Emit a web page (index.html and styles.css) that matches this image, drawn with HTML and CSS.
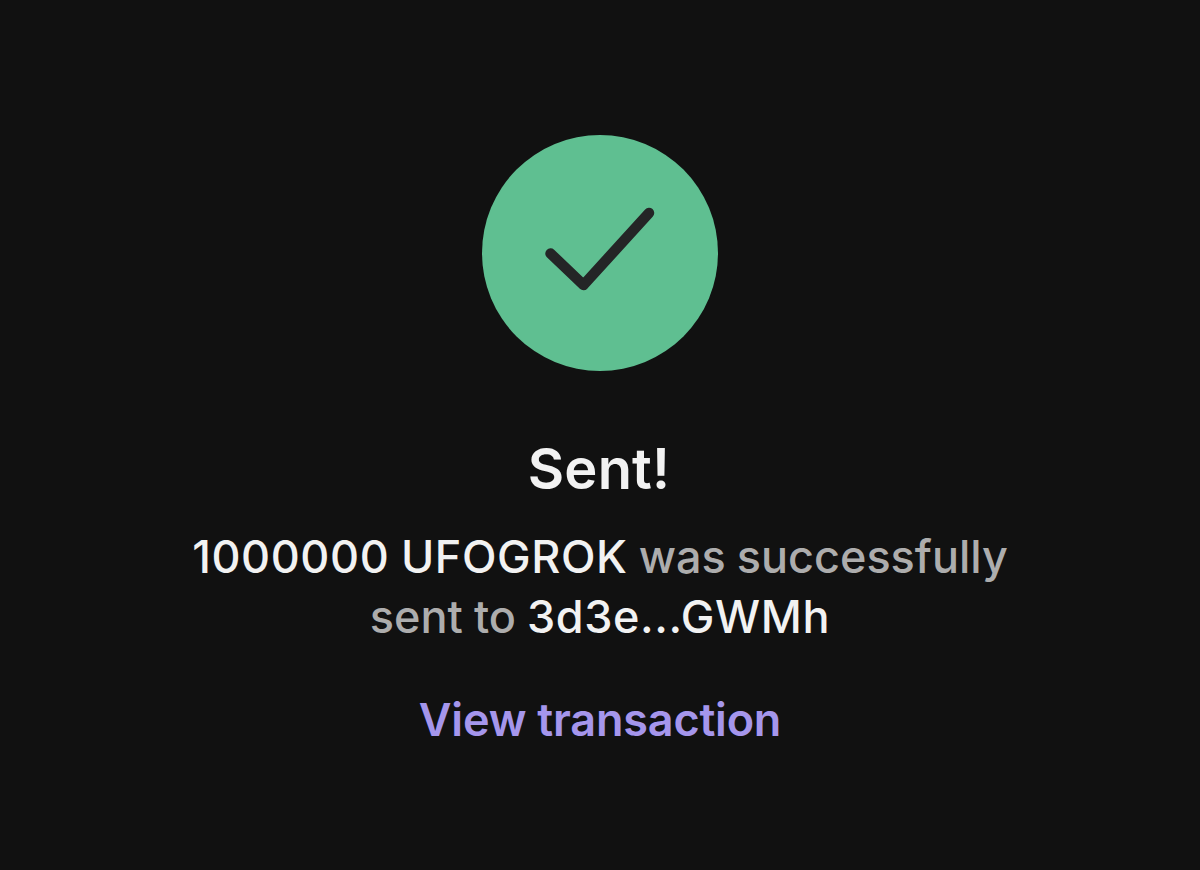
FILE: index.html
```
<!DOCTYPE html>
<html lang="en">
<head>
<meta charset="utf-8">
<title>Sent</title>
<link rel="stylesheet" href="styles.css">
</head>
<body>
<main class="screen">
  <div class="badge">
    <svg class="check" viewBox="0 0 236 236" width="236" height="236" aria-hidden="true">
      <path d="M68.500 118.500 L101.500 150 L167 78" fill="none" stroke="#242526" stroke-width="10.500" stroke-linecap="round" stroke-linejoin="round"/>
    </svg>
  </div>
  <h1 class="title">Sent!</h1>
  <p class="message"><span class="strong">1000000 UFOGROK</span> was successfully<br>sent to <span class="strong">3d3e...GWMh</span></p>
  <a class="link" href="#">View transaction</a>
</main>
</body>
</html>
```

FILE: styles.css
```
* { box-sizing: border-box; }
html, body { margin: 0; height: 100%; }
body { background: #111111; font-family: Inter, "Liberation Sans", sans-serif; }
.screen { display: flex; flex-direction: column; align-items: center; padding-top: 135px; height: 870px; overflow: hidden; }
.badge { width: 236px; height: 236px; border-radius: 50%; background: #5fbf91; }
.check { display: block; }
.title { margin: 67px 0 0; padding-right: 2px; font-size: 56px; line-height: 62px; font-weight: 600; color: #f2f2f2; letter-spacing: 0.2px; }
.message { margin: 27px 0 0; font-size: 45px; line-height: 60px; font-weight: 500; color: #adadad; text-align: center; word-spacing: -1px; }
.strong { color: #f2f2f2; letter-spacing: 0.6px; }
.link { margin-top: 43px; font-size: 45px; line-height: 60px; font-weight: 600; color: #a596ec; text-decoration: none; letter-spacing: -0.2px; }
```
